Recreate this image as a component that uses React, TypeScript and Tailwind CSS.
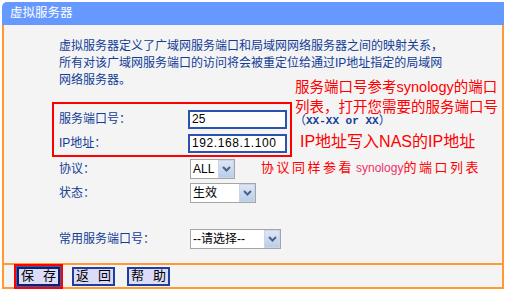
import React from "react";

const CJK = '"Liberation Sans", "Noto Sans CJK SC", sans-serif';

function Select({ label, width }: { label: string; width: number }) {
  return (
    <div
      className="flex h-[20px] items-stretch border border-[#a5a5a5] bg-white"
      style={{ width }}
    >
      <div className="flex flex-1 items-center pl-[2px] text-[12px] text-black">{label}</div>
      <div className="flex w-[16px] items-center justify-center border border-[#c9d6ea] bg-gradient-to-b from-[#dce7f7] to-[#b9cde9]">
        <svg width="9" height="6" viewBox="0 0 9 6">
          <path d="M1 1 L4.5 4.5 L8 1" stroke="#4d6185" strokeWidth="2" fill="none" />
        </svg>
      </div>
    </div>
  );
}

function Btn({ a, b, focused }: { a: string; b: string; focused?: boolean }) {
  return (
    <div
      className={
        "flex h-[19px] w-[43px] items-center justify-center gap-[9px] bg-[#dcdcf8] text-[13px] text-black " +
        (focused ? "border-2 border-[#0c2366] outline outline-1 outline-[#3a59b8]" : "border-2 border-[#1d3fa3]")
      }
    >
      <span>{a}</span>
      <span>{b}</span>
    </div>
  );
}

export default function App() {
  return (
    <div className="h-[290px] w-[506px] bg-white" style={{ fontFamily: CJK }}>
      <div className="relative ml-[2px] w-[502px] pt-[2px]">
        <div className="flex h-[23px] items-center rounded-tl-[5px] bg-[#6699ff] pl-[8px] text-[12.5px] text-white">
          虚拟服务器
        </div>
        <div className="border-x-2 border-[#ff9933] bg-[#f4f4f4] pb-[13px] pt-[13px]">
          <div className="pl-[55px] text-[12px] leading-[17px] text-[#123c96]">
            虚拟服务器定义了广域网服务端口和局域网网络服务器之间的映射关系，
            <br />
            所有对该广域网服务端口的访问将会被重定位给通过IP地址指定的局域网
            <br />
            网络服务器。
          </div>
          <div className="ml-[48px] mt-[13px] w-[240px] border-2 border-[#ff0000] pl-[5px] pt-[3px]">
            <div className="flex h-[24px] items-center">
              <div className="w-[129px] text-[12px] text-[#123c96]">服务端口号：</div>
              <div className="flex h-[19px] w-[99px] items-center border-2 border-[#2a52b0] bg-white pl-[2px] text-[12px] text-black">
                25
              </div>
            </div>
            <div className="flex h-[24px] items-center">
              <div className="w-[129px] text-[12px] text-[#123c96]">IP地址：</div>
              <div className="flex h-[19px] w-[99px] items-center overflow-hidden whitespace-nowrap border-2 border-[#2a52b0] bg-white pl-[2px] text-[12px] tracking-[0.6px] text-black">
                192.168.1.100
              </div>
            </div>
          </div>
          <div className="pl-[55px]">
            <div className="flex h-[24px] items-center">
              <div className="w-[131px] text-[12px] text-[#123c96]">协议：</div>
              <Select label="ALL" width={45} />
            </div>
            <div className="flex h-[24px] items-center">
              <div className="w-[131px] text-[12px] text-[#123c96]">状态：</div>
              <Select label="生效" width={66} />
            </div>
            <div className="mt-[23px] flex h-[22px] items-center">
              <div className="w-[131px] text-[12px] text-[#123c96]">常用服务端口号：</div>
              <Select label="--请选择--" width={91} />
            </div>
          </div>
        </div>
        <div className="flex h-[26px] items-center gap-[9px] border-x-2 border-b-2 border-t-2 border-[#ff9933] bg-[#f4f4f4] pl-[10px]">
          <div className="border-2 border-[#ff0000] p-[1px]">
            <Btn a="保" b="存" focused />
          </div>
          <Btn a="返" b="回" />
          <div className="ml-[3px]">
            <Btn a="帮" b="助" />
          </div>
        </div>

        <div className="absolute left-[293px] top-[77px] whitespace-nowrap text-[14.5px] leading-[20px] text-[#ff0000]">
          服务端口号参考synology的端口
        </div>
        <div className="absolute left-[293px] top-[97px] whitespace-nowrap text-[14.5px] leading-[20px] text-[#ff0000]">
          列表，打开您需要的服务端口号
        </div>
        <div className="absolute left-[292px] top-[113px] flex items-center whitespace-nowrap text-[12px] leading-[16px] text-[#123c96]">
          <span>（</span>
          <span
            className="text-[11px] font-bold"
            style={{ fontFamily: '"Liberation Mono", monospace' }}
          >
            XX-XX or XX
          </span>
          <span>）</span>
        </div>
        <div className="absolute left-[298px] top-[131px] whitespace-nowrap text-[16px] leading-[22px] text-[#ff0000]">
          IP地址写入NAS的IP地址
        </div>
        <div className="absolute left-[259px] top-[159px] flex items-baseline whitespace-nowrap text-[13px] leading-[18px] text-[#ff0000]">
          <span className="tracking-[2.5px]">协议同样参看</span>
          <span className="ml-[2px] text-[12px] text-[#f0306a]">synology</span>
          <span className="tracking-[2.5px]">的端口列表</span>
        </div>
      </div>
    </div>
  );
}
